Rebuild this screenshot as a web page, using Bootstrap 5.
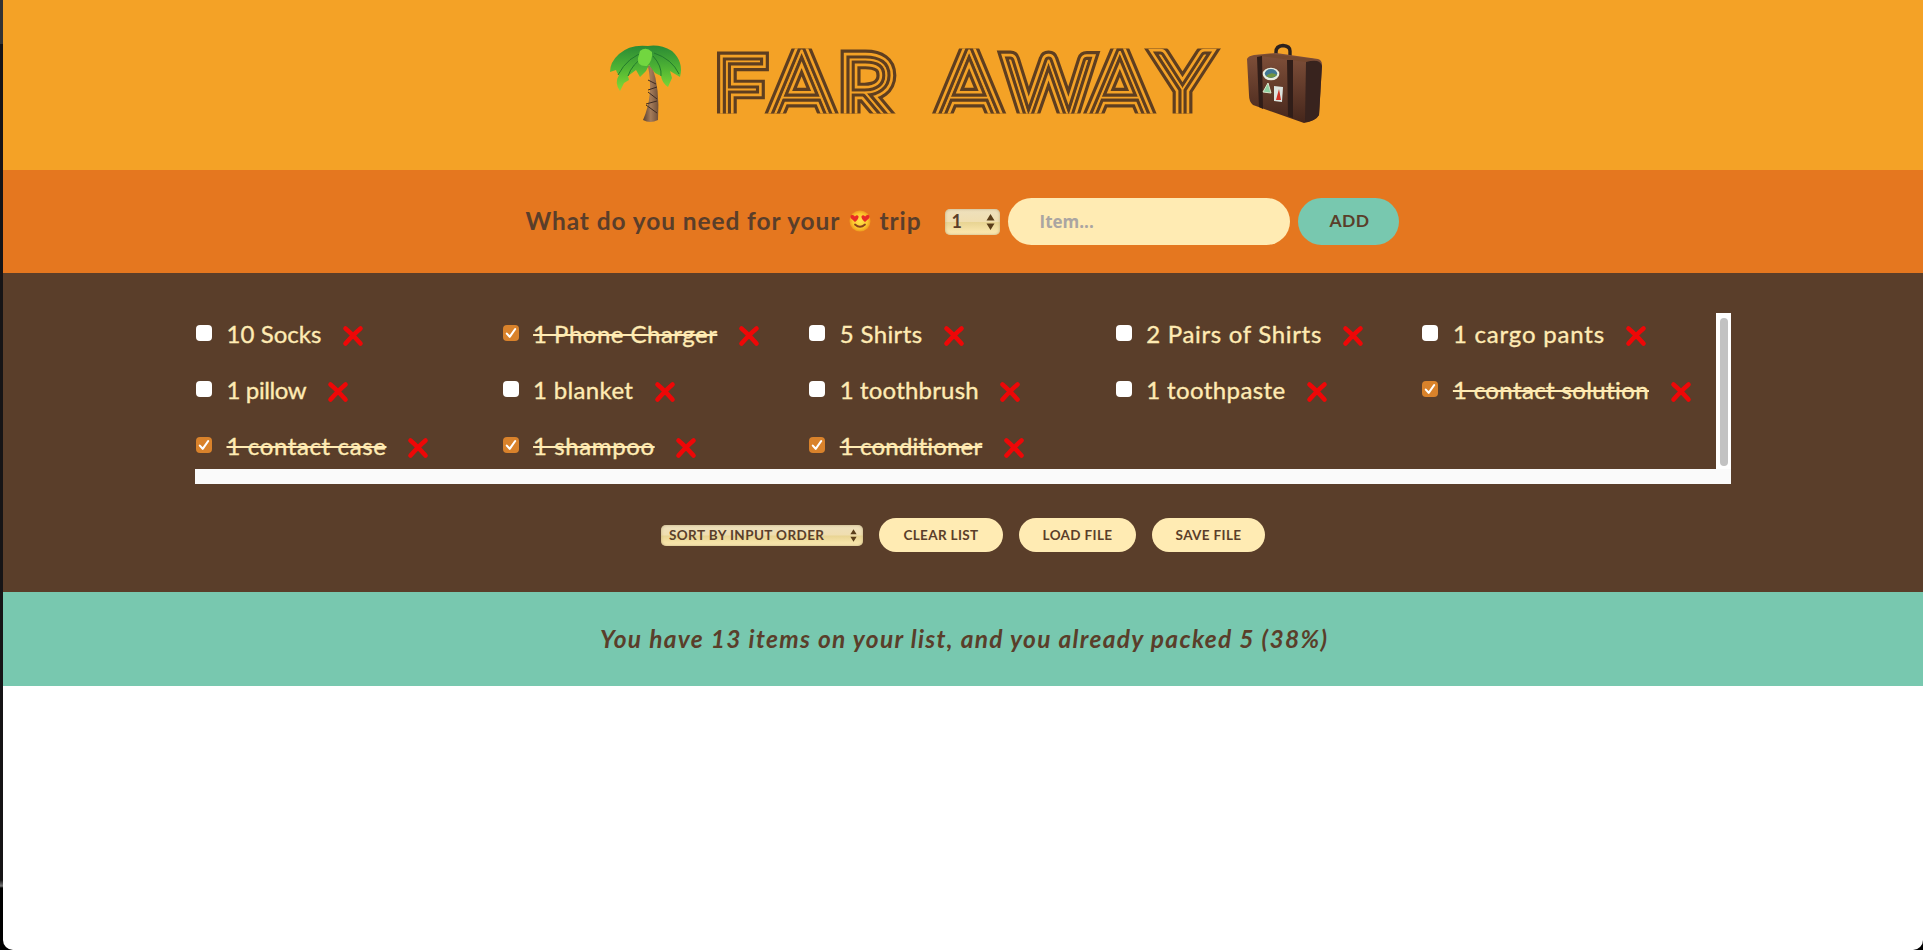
<!DOCTYPE html>
<html lang="en">
<head>
<meta charset="utf-8">
<meta name="viewport" content="width=device-width, initial-scale=1">
<title>Far Away</title>
<link href="https://cdn.jsdelivr.net/npm/bootstrap@5.3.0/dist/css/bootstrap.min.css" rel="stylesheet">
<style>
  :root { --sun:#f4a226; --orange:#e5771f; --brown:#5a3e2a; --teal:#78c8af; --cream:#ffebb3; }
  html { background:#000; }
  body { height:950px; overflow:hidden; background:linear-gradient(#333 0 44px,#161416 44px 880px,#777 886px,#000 888px); color:var(--brown); font-family:Lato,"Open Sans",sans-serif; }
  .app-window { height:950px; margin-left:3px; background:#fff; border-radius:0 0 10px 10px; overflow:hidden; }
  .logo-bar { height:170px; background:var(--sun); }
  .logo-bar svg { display:block; }
  .ask-bar { height:103px; background:var(--orange); padding-right:2px; }
  .ask-title { font-size:24.5px; font-weight:700; letter-spacing:.9px; width:394px; margin-right:25px; white-space:nowrap; }
  .ask-title svg { width:22px; height:22px; margin:-5px 2px 0 2px; }
  .pick { background:linear-gradient(#eee0bd,#f0deb0 48%,#e8d493 52%,#ffebb3); box-shadow:inset 0 0 3px #bba97a; border-radius:5px; font-weight:700; }
  .pick-qty { width:55px; height:26px; padding:0 5px 0 7px; font-size:18px; }
  .pick-sort { width:202px; height:21px; padding:0 6px 0 8px; font-size:13.5px; letter-spacing:.4px; margin-right:16px; }
  .item-input { width:282px; height:47px; border:0; border-radius:24px; background:var(--cream); padding:0 32px; font:700 17px "Open Sans",sans-serif; margin:0 8px; }
  .item-input::placeholder { color:#aaa5a2; opacity:1; }
  .pill { border:0; border-radius:24px; background:var(--cream); color:var(--brown); font-weight:700; font-size:13.5px; letter-spacing:.35px; height:34px; padding:0; white-space:nowrap; }
  .pill-add { width:101px; height:47px; background:var(--teal); font-size:17.5px; padding-left:3px; }
  .list-zone { height:319px; background:var(--brown); padding-top:40px; }
  .scroll-frame { width:1536px; height:171px; margin-left:192px; display:grid; grid-template:156px 15px / 1521px 15px; }
  .packing { display:grid; grid-template-columns:repeat(5,306.6px); grid-auto-rows:56px; margin:-7px 0 0; color:var(--cream); font-size:24px; -webkit-text-stroke:.35px var(--cream); }
  .packing li { height:56px; padding-left:1px; white-space:nowrap; }
  .packing span { letter-spacing:var(--track); }
  .tick { appearance:none; width:16px; height:16px; border-radius:4px; background:#fff; margin:-3px 14.5px 0 0; flex:none; }
  .tick:checked { background:#d9822b url("data:image/svg+xml,%3Csvg xmlns='http://www.w3.org/2000/svg' viewBox='0 0 16 16'%3E%3Cpath d='M3.8 8.6 6.7 11.8 12.2 4' fill='none' stroke='white' stroke-width='2.1' stroke-linecap='round' stroke-linejoin='round'/%3E%3C/svg%3E"); }
  .tick:checked + span { text-decoration:line-through; text-decoration-thickness:2px; }
  .cross { width:22px; height:22px; margin:3px 0 0 20.5px; flex:none; }
  .track-y { background:#fff; padding:5px 3px 3px 4px; }
  .thumb-y { height:148px; background:#c2c2c2; border-radius:4px; }
  .track-x { grid-column:1 / 3; background:#fafafa; }
  .list-actions { margin-top:34px; }
  .stats-bar { height:94px; background:var(--teal); font-size:24.5px; font-weight:700; font-style:italic; padding-top:1px; }
  .stats-bar em { width:726px; white-space:nowrap; letter-spacing:1.33px; }
</style>
</head>
<body>
<svg width="0" height="0" class="position-absolute" aria-hidden="true">
  <symbol id="x" viewBox="0 0 22 22"><path d="M3.5 3.5Q10 9 18.5 18.5M18.5 3.5Q12 9 3.5 18.5" fill="none" stroke="#ee0707" stroke-width="4.6" stroke-linecap="round"/></symbol>
</svg>
<div class="app-window">
  <header class="logo-bar">
    <svg width="1920" height="170" viewBox="3 0 1920 170">
      <defs>
        <linearGradient id="leaf" x2="0" y2="1"><stop stop-color="#2a8a35"/><stop offset=".5" stop-color="#4fb434"/><stop offset="1" stop-color="#83db36"/></linearGradient>
        <linearGradient id="trunk"><stop stop-color="#59402f"/><stop offset=".5" stop-color="#a57c5a"/><stop offset="1" stop-color="#70503a"/></linearGradient>
        <linearGradient id="hide" x2="0" y2="1"><stop stop-color="#80503a"/><stop offset="1" stop-color="#45261b"/></linearGradient>
        <clipPath id="band"><rect x="700" y="48.5" width="530" height="65"/></clipPath>
      </defs>
      <!-- striped lettering: alternating strokes round one hairline text -->
      <g clip-path="url(#band)" stroke-linejoin="miter">
        <g fill="#5e3e20" stroke="#5e3e20" stroke-width="18.8"><text id="logo" font-family="Lato" font-weight="100"><tspan x="717" y="116.500" font-size="81">F</tspan><tspan x="768.500" y="123" font-size="104">A</tspan><tspan x="839" y="125" font-size="95">R</tspan> <tspan x="936" y="123" font-size="104">A</tspan><tspan x="1007" y="118" font-size="83">W</tspan><tspan x="1087" y="123" font-size="103">A</tspan><tspan x="1158" y="115" font-size="86">Y</tspan></text></g>
        <use href="#logo" fill="#f4a226" stroke="#f4a226" stroke-width="12.4"/>
        <use href="#logo" fill="#5e3e20" stroke="#5e3e20" stroke-width="7.2"/>
        <use href="#logo" fill="#f4a226" stroke="#f4a226" stroke-width=".9"/>
      </g>
      <g>
        <path d="M648 66Q654 95 643 120Q650 124 658 120Q660 88 652 66Z" fill="url(#trunk)"/>
        <path d="M648 80l8 4M648 90l9-3M648 92l9 7M646 104l11-3M646 105l11 8" stroke="#3e2b22" stroke-width="1" fill="none"/>
        <path d="M648 46Q630 44 619 54Q610 62 610 72L616 70Q617 74 619 75Q614 83 620 91L624 83L629 80L628 76L636 70L640 77L646 71L649 65L655 73L661 76Q662 83 668 87L672 78L670 71L680 77Q684 62 672 51Q660 44 648 46Z" fill="url(#leaf)"/>
        <path d="M646 52Q628 56 618 75M628 76Q632 64 645 56M654 53Q672 59 679 74M661 76Q662 66 653 56" fill="none" stroke="#237a2d" stroke-width="1"/>
        <path d="M640 51Q646 46 652 52Q653 60 647 66Q637 67 638 58Z" fill="#72d640"/>
      </g>
      <g>
        <path d="M1276 57V52Q1276 46 1283 45.500Q1290 46 1290 51V57" fill="none" stroke="#2b211f" stroke-width="3.400"/>
        <path d="M1247 59Q1248 56 1254 55L1276 53L1318 59Q1322 60 1322 65L1319 115Q1316 121 1304 123L1253 105Q1249 102 1249 95Z" fill="url(#hide)"/>
        <path d="M1249 57L1270 54L1314 59L1306 62L1260 56Z" fill="#75482f"/>
        <path d="M1306 62Q1320 58 1322 66L1319 115Q1315 121 1305 122Z" fill="#38231e"/>
        <path d="M1257 57L1262 56L1263 109L1259 107ZM1287 60L1293 60L1293 118L1288 116Z" fill="#301d18"/>
        <ellipse cx="1271" cy="74" rx="8.3" ry="6.3" fill="#e9eee1"/><ellipse cx="1271" cy="73.5" rx="6.2" ry="4.4" fill="#417794"/><path d="M1266 76Q1271 71 1277 75Q1271 80 1266 76Z" fill="#719442"/>
        <path d="M1268 83L1271 93L1263 92Z" fill="#8ed1a1" stroke="#dae5ca"/>
        <path d="M1274 86L1283 87L1282 102L1274 101Z" fill="#dce4df"/><path d="M1279 89L1281 100H1276Z" fill="#cf3027"/>
      </g>
    </svg>
  </header>
  <form class="ask-bar d-flex align-items-center justify-content-center">
    <div class="ask-title">What do you need for your <svg viewBox="0 0 22 22"><defs><radialGradient id="face"><stop stop-color="#ffe34b"/><stop offset=".7" stop-color="#fdc52d"/><stop offset="1" stop-color="#ee9b1e"/></radialGradient></defs><circle cx="11" cy="11" r="10.5" fill="url(#face)"/><path d="M6 12L1.7 8Q.8 5.4 3 5Q5 4.700 5.900 6.500Q8 4.200 9.500 6.300Q10 9 6 12ZM16 12Q12 9 12.500 6.300Q14 4.200 16.100 6.500Q17 4.700 19 5Q21.200 5.400 20.300 8Z" fill="#e92b25"/><path d="M6 14.500Q11 19 16 14.500" fill="none" stroke="#8b421c" stroke-width="1.8" stroke-linecap="round"/></svg> trip</div>
    <div class="pick pick-qty d-flex align-items-center justify-content-between"><span>1</span><svg width="9" height="16" viewBox="0 0 9 16"><path d="M4.500 0L8.500 6.500H.5ZM.5 9.500H8.500L4.500 16Z" fill="#5a3e1b"/></svg></div>
    <input class="item-input" type="text" placeholder="Item..." aria-label="Item">
    <button class="pill pill-add" type="button">ADD</button>
  </form>
  <main class="list-zone">
    <div class="scroll-frame">
      <ul class="packing list-unstyled">
        <li class="d-flex align-items-center" style="--track:.05px"><input class="tick" type="checkbox"><span>10 Socks</span><svg class="cross"><use href="#x"/></svg></li>
        <li class="d-flex align-items-center" style="--track:.48px"><input class="tick" type="checkbox" checked><span>1 Phone Charger</span><svg class="cross"><use href="#x"/></svg></li>
        <li class="d-flex align-items-center" style="--track:.38px"><input class="tick" type="checkbox"><span>5 Shirts</span><svg class="cross"><use href="#x"/></svg></li>
        <li class="d-flex align-items-center" style="--track:.68px"><input class="tick" type="checkbox"><span>2 Pairs of Shirts</span><svg class="cross"><use href="#x"/></svg></li>
        <li class="d-flex align-items-center" style="--track:.8px"><input class="tick" type="checkbox"><span>1 cargo pants</span><svg class="cross"><use href="#x"/></svg></li>
        <li class="d-flex align-items-center" style="--track:-.38px"><input class="tick" type="checkbox"><span>1 pillow</span><svg class="cross"><use href="#x"/></svg></li>
        <li class="d-flex align-items-center" style="--track:.33px"><input class="tick" type="checkbox"><span>1 blanket</span><svg class="cross"><use href="#x"/></svg></li>
        <li class="d-flex align-items-center" style="--track:.18px"><input class="tick" type="checkbox"><span>1 toothbrush</span><svg class="cross"><use href="#x"/></svg></li>
        <li class="d-flex align-items-center" style="--track:.38px"><input class="tick" type="checkbox"><span>1 toothpaste</span><svg class="cross"><use href="#x"/></svg></li>
        <li class="d-flex align-items-center" style="--track:.38px"><input class="tick" type="checkbox" checked><span>1 contact solution</span><svg class="cross"><use href="#x"/></svg></li>
        <li class="d-flex align-items-center" style="--track:.62px"><input class="tick" type="checkbox" checked><span>1 contact case</span><svg class="cross"><use href="#x"/></svg></li>
        <li class="d-flex align-items-center" style="--track:.6px"><input class="tick" type="checkbox" checked><span>1 shampoo</span><svg class="cross"><use href="#x"/></svg></li>
        <li class="d-flex align-items-center" style="--track:.18px"><input class="tick" type="checkbox" checked><span>1 conditioner</span><svg class="cross"><use href="#x"/></svg></li>
      </ul>
      <div class="track-y"><div class="thumb-y"></div></div>
      <div class="track-x"></div>
    </div>
    <div class="list-actions d-flex align-items-center justify-content-center">
      <div class="pick pick-sort d-flex align-items-center justify-content-between"><span>SORT BY INPUT ORDER</span><svg width="7" height="13" viewBox="0 0 9 16"><path d="M4.500 0L8.500 6.500H.5ZM.5 9.500H8.500L4.500 16Z" fill="#5a3e1b"/></svg></div>
      <button class="pill me-3" style="width:124px" type="button">CLEAR LIST</button>
      <button class="pill me-3" style="width:117px" type="button">LOAD FILE</button>
      <button class="pill" style="width:113px" type="button">SAVE FILE</button>
    </div>
  </main>
  <footer class="stats-bar d-flex align-items-center justify-content-center"><em>You have 13 items on your list, and you already packed 5 (38%)</em></footer>
</div>
<script src="https://cdn.jsdelivr.net/npm/bootstrap@5.3.0/dist/js/bootstrap.bundle.min.js"></script>
</body>
</html>
